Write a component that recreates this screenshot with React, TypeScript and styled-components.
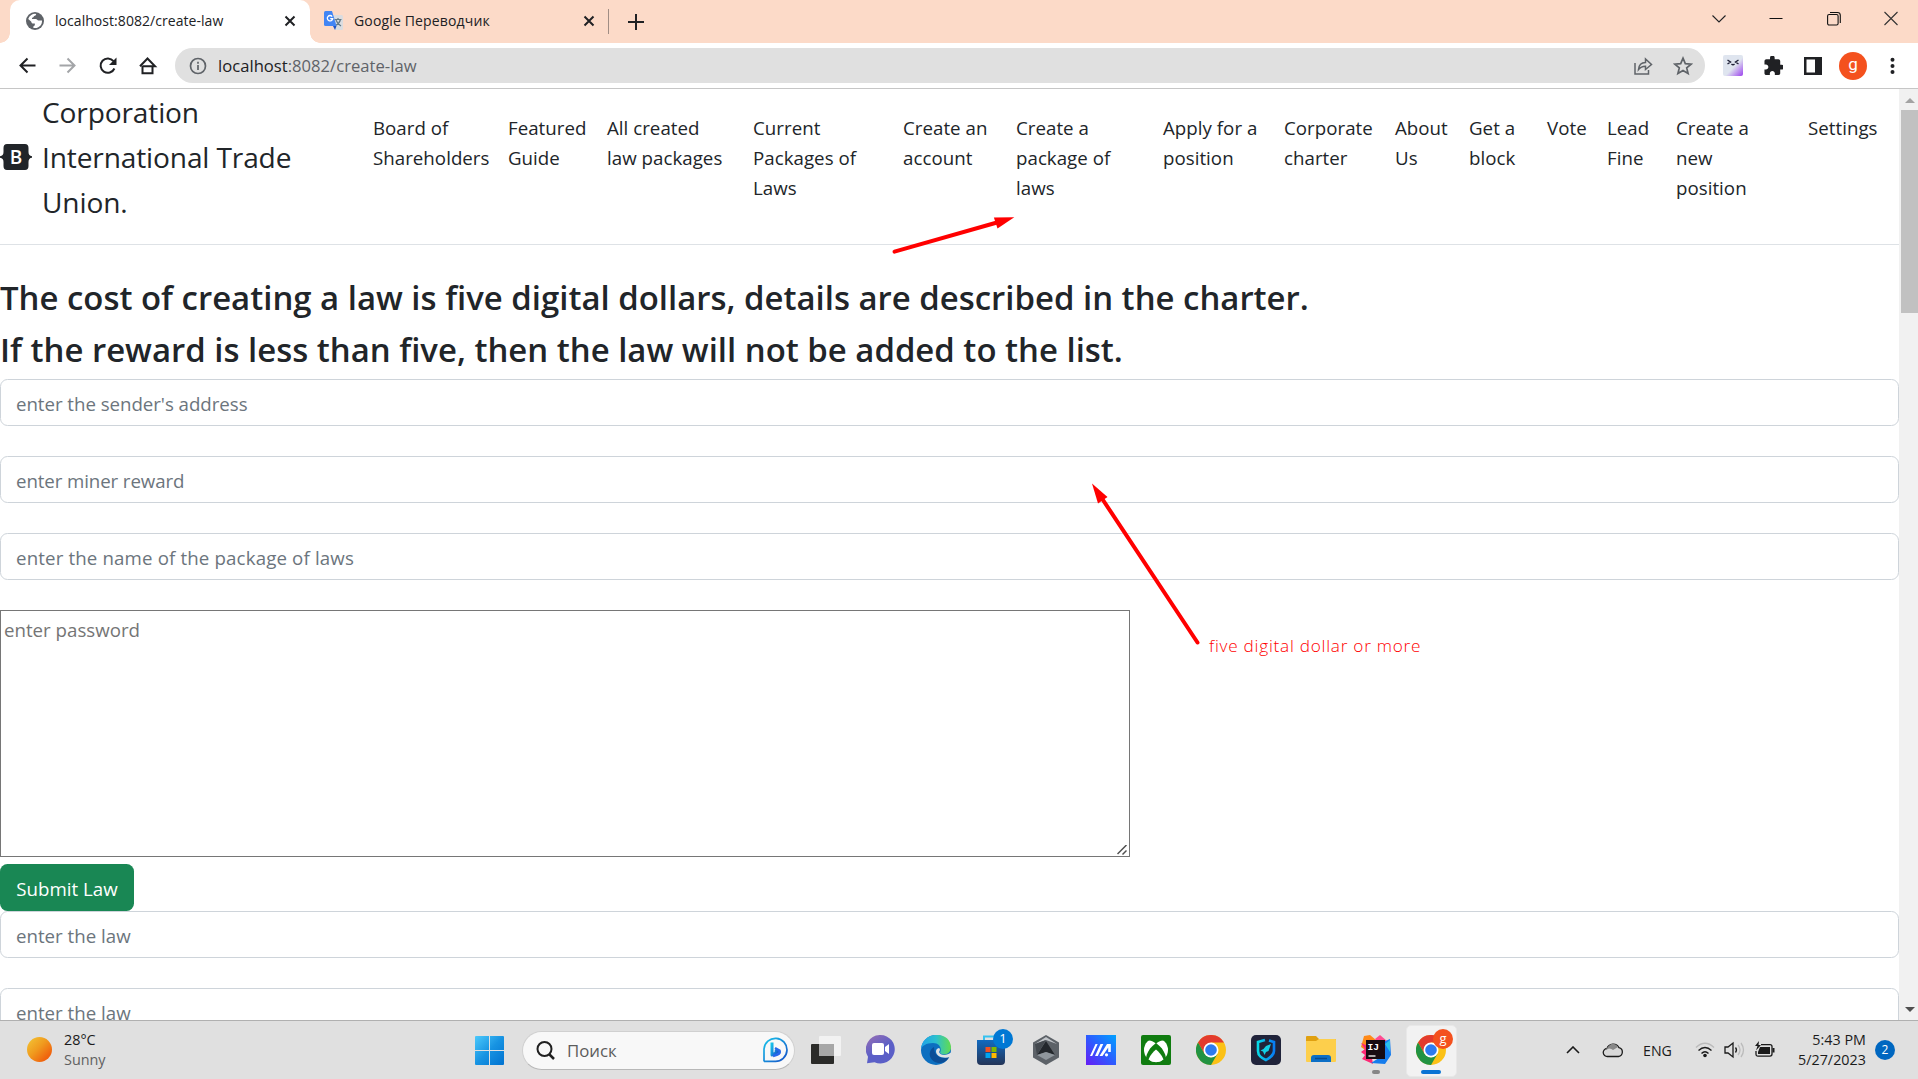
import React from "react";
import styled, { createGlobalStyle } from "styled-components";

const Global = createGlobalStyle`
  * { box-sizing: border-box; }
  html, body { margin: 0; padding: 0; overflow: hidden; background: #fff; }
  body { font-family: "Open Sans", "Noto Sans", sans-serif; color: #212529; }
`;

const Screen = styled.div`
  position: relative;
  width: 1918px;
  height: 1079px;
  display: flex;
  flex-direction: column;
  overflow: hidden;
  background: #fff;
`;

/* ---------- browser chrome ---------- */
const TabStrip = styled.div`
  height: 43px;
  flex: none;
  display: flex;
  background: #fcdac8;
  padding-left: 10px;
`;
const Tab = styled.div<{ $active?: boolean; $width: number }>`
  position: relative;
  width: ${(p) => p.$width}px;
  height: 43px;
  display: flex;
  align-items: center;
  padding: ${(p) => (p.$active ? "0 14px 2px 16px" : "0 13px 2px 14px")};
  border-radius: 10px 10px 0 0;
  background: ${(p) => (p.$active ? "#fff" : "transparent")};
  ${(p) =>
    p.$active &&
    `&::before, &::after {
      content: ""; position: absolute; bottom: 0; width: 10px; height: 10px;
    }
    &::before { left: -10px; background: radial-gradient(circle at 0 0, #fcdac8 9.5px, #fff 10px); }
    &::after { right: -10px; background: radial-gradient(circle at 100% 0, #fcdac8 9.5px, #fff 10px); }`}
`;
const TabTitle = styled.span<{ $spacing?: number }>`
  flex: 1;
  margin-left: 11px;
  padding-bottom: 1px;
  font-size: 14px;
  letter-spacing: ${(p) => p.$spacing ?? 0}px;
  color: #202124;
  white-space: nowrap;
`;
const TabDivider = styled.div`
  width: 1px;
  height: 25px;
  margin-top: 9px;
  background: #a08d84;
`;
const NewTab = styled.div`
  padding: 13px 0 0 19px;
  flex: 1;
`;
const WindowButtons = styled.div`
  display: flex;
  width: 206px;
  justify-content: space-between;
  padding: 11px 20px 0 0;
`;
const Toolbar = styled.div`
  height: 46px;
  flex: none;
  display: flex;
  align-items: center;
  border-bottom: 1px solid #c6c6c6;
  padding: 0 0 0 18px;
`;
const NavButtons = styled.div`
  display: flex;
  width: 157px;
  gap: 20px;
`;
const Omnibox = styled.div`
  width: 1530px;
  height: 35px;
  display: flex;
  align-items: center;
  border-radius: 18px;
  background: #e0e0e0;
  padding: 0 12px 0 14px;
`;
const Url = styled.div`
  flex: 1;
  margin-left: 11px;
  padding-bottom: 1px;
  font-size: 16.6px;
  letter-spacing: 0.02px;
  color: #5f6368;
  b { font-weight: 400; color: #202124; }
`;
const OmniIcons = styled.div`
  display: flex;
  gap: 20px;
`;
const Extensions = styled.div`
  flex: 1;
  display: flex;
  align-items: center;
  padding-left: 18px;
`;
const Slot = styled.div<{ $w: number }>`
  display: flex;
  width: ${(p) => p.$w}px;
`;
const Avatar = styled.div`
  width: 28px;
  height: 28px;
  border-radius: 50%;
  background: #f4511e;
  color: #fff;
  font: 17px/25px Roboto, sans-serif;
  text-align: center;
`;

/* ---------- page ---------- */
const Viewport = styled.div`
  flex: none;
  height: 931px;
  display: flex;
  overflow: hidden;
`;
const Page = styled.main`
  width: 1899px;
  flex: none;
`;
const Header = styled.header`
  height: 156px;
  display: flex;
  border-bottom: 1px solid #dee2e6;
  margin-bottom: 30px;
`;
const Brand = styled.div`
  width: 363px;
  flex: none;
  display: flex;
  align-items: center;
  padding-bottom: 20px;
  gap: 10px;
`;
const BrandText = styled.span`
  padding-top: 1px;
  font-size: 28.1px;
  line-height: 45px;
  letter-spacing: -0.14px;
  white-space: nowrap;
`;
const Nav = styled.nav`
  display: flex;
  padding-top: 24px;
`;
const NavLink = styled.a<{ $w: number }>`
  width: ${(p) => p.$w}px;
  padding-left: 10px;
  font-size: 18.7px;
  line-height: 30px;
  letter-spacing: 0.03px;
  white-space: nowrap;
`;
const Heading = styled.h3`
  height: 42px;
  margin: 0 0 10px;
  padding-top: 2px;
  font-size: 32.9px;
  line-height: 42px;
  font-weight: 600;
  letter-spacing: 0.01px;
  white-space: nowrap;
`;
const Field = styled.input<{ $spacing?: number }>`
  display: block;
  width: 1899px;
  height: 47px;
  margin: 0 0 30px;
  padding: 5px 15px 3px;
  border: 1px solid #ced4da;
  border-radius: 7.5px;
  background: #fff;
  font: 18.7px "Open Sans", "Noto Sans", sans-serif;
  letter-spacing: ${(p) => p.$spacing ?? 0}px;
  outline: none;
  &::placeholder { color: #6c757d; opacity: 1; }
`;
const PasswordArea = styled.textarea`
  display: block;
  width: 1130px;
  height: 247px;
  margin: 0 0 7px;
  padding: 4px 3px;
  border: 1px solid #767676;
  font: 18.7px/30px "Open Sans", "Noto Sans", sans-serif;
  resize: none;
  outline: none;
  &::placeholder { color: #757575; opacity: 1; }
`;
const AreaWrap = styled.div`
  position: relative;
  width: 1130px;
`;
const Grip = styled.svg`
  position: absolute;
  right: 3px;
  bottom: 2px;
`;
const Submit = styled.button`
  display: block;
  width: 134px;
  height: 47px;
  padding: 2px 0 0;
  border: 0;
  border-radius: 7.5px;
  background: #198754;
  color: #fff;
  font: 18.7px "Open Sans", "Noto Sans", sans-serif;
  white-space: nowrap;
`;
const ScrollTrack = styled.div`
  width: 19px;
  display: flex;
  flex-direction: column;
  justify-content: space-between;
  background: #f1f1f1;
  padding: 9px 0 8px 2px;
`;
const ScrollTop = styled.div`
  display: flex;
  flex-direction: column;
  align-items: center;
  gap: 7px;
`;
const Thumb = styled.div`
  width: 17px;
  height: 203px;
  background: #c1c1c1;
`;
const ScrollArrow = styled.div<{ $down?: boolean }>`
  align-self: center;
  width: 0;
  height: 0;
  border: 5px solid transparent;
  border-${(p) => (p.$down ? "top" : "bottom")}-color: ${(p) => (p.$down ? "#505050" : "#a3a3a3")};
  border-${(p) => (p.$down ? "bottom" : "top")}-width: 0;
`;
const Annotations = styled.svg`
  position: absolute;
  left: 0;
  top: 0;
  pointer-events: none;
`;
const Note = styled.div`
  position: absolute;
  left: 1209px;
  top: 633px;
  font-size: 17.2px;
  line-height: 26px;
  font-weight: 300;
  letter-spacing: 0.75px;
  color: #f00;
  white-space: nowrap;
`;

/* ---------- taskbar ---------- */
const Taskbar = styled.footer`
  height: 59px;
  flex: none;
  display: flex;
  align-items: center;
  border-top: 1px solid #b0b0b0;
  background: #e0e0e0;
`;
const Weather = styled.div`
  width: 475px;
  display: flex;
  align-items: center;
  padding-left: 27px;
  gap: 12px;
`;
const Sun = styled.div`
  width: 25px;
  height: 25px;
  margin-top: -2px;
  border-radius: 50%;
  background: linear-gradient(135deg, #f2c335 5%, #f09a1e 45%, #f0640e 80%);
`;
const WeatherText = styled.div`
  font-size: 14.4px;
  line-height: 20px;
  color: #1b1b1b;
  div + div { color: #606060; }
`;
const SearchBox = styled.div`
  width: 273px;
  height: 39px;
  margin: 0 3px 0 18px;
  display: flex;
  align-items: center;
  padding: 0 6px 0 13px;
  border-radius: 20px;
  border: 1px solid #d0d0d0;
  border-bottom-color: #b8b8b8;
  background: #f8f8f8;
  span { flex: 1; margin-left: 12px; color: #5c5c5c; font-size: 16.8px; }
`;
const Apps = styled.div`
  display: flex;
  width: 660px;
`;
const AppSlot = styled.div<{ $selected?: boolean }>`
  position: relative;
  width: 55px;
  height: 50px;
  flex: none;
  display: flex;
  justify-content: center;
  align-items: center;
  padding-bottom: 1px;
  ${(p) =>
    p.$selected &&
    `&::before { content: ""; position: absolute; left: 3px; top: 0; width: 49px; height: 50px; border: 1px solid #e8e8e8; border-radius: 5px; background: #f2f2f2; }`}
  > svg { position: relative; }
`;
const Badge = styled.div<{ $c: string }>`
  position: absolute;
  right: 5px;
  top: 4px;
  width: 20px;
  height: 20px;
  border-radius: 50%;
  background: ${(p) => p.$c};
  color: #fff;
  font-size: 13px;
  line-height: 19px;
  text-align: center;
`;
const Running = styled.div<{ $w: number; $c: string }>`
  position: absolute;
  bottom: 1px;
  left: calc(50% - ${(p) => p.$w / 2}px);
  width: ${(p) => p.$w}px;
  height: 4px;
  border-radius: 2px;
  background: ${(p) => p.$c};
`;
const Tray = styled.div`
  flex: 1;
  display: flex;
  align-items: center;
  justify-content: flex-end;
  padding-right: 23px;
  color: #1b1b1b;
`;
const Lang = styled.span`
  width: 34px;
  margin: 0 18px 0 20px;
  font-size: 14.2px;
`;
const Clock = styled.div`
  width: 76px;
  margin: 0 9px 0 15px;
  font-size: 14.3px;
  line-height: 20px;
  letter-spacing: 0.04px;
  text-align: right;
  white-space: nowrap;
`;
const Count = styled.div`
  width: 20px;
  height: 20px;
  border-radius: 50%;
  background: #0067c0;
  color: #fff;
  font-size: 12px;
  line-height: 20px;
  text-align: center;
`;

const links: [string[], number][] = [
  [["Board of", "Shareholders"], 135],
  [["Featured", "Guide"], 99],
  [["All created", "law packages"], 146],
  [["Current", "Packages of", "Laws"], 150],
  [["Create an", "account"], 113],
  [["Create a", "package of", "laws"], 147],
  [["Apply for a", "position"], 121],
  [["Corporate", "charter"], 111],
  [["About", "Us"], 74],
  [["Get a", "block"], 78],
  [["Vote"], 60],
  [["Lead", "Fine"], 69],
  [["Create a", "new", "position"], 132],
  [["Settings"], 90],
];

const Cross = () => (
  <svg width="12" height="12" viewBox="0 0 12 12" stroke="#202124" strokeWidth="2" fill="none">
    <path d="M1.500 1.500l9 9M10.500 1.500l-9 9" />
  </svg>
);

const ChromeLogo = () => (
  <svg width="30" height="30" viewBox="0 0 30 30">
    <circle cx="15" cy="15" r="15" fill="#fbc116" />
    <path d="M2 7.5A15 15 0 0 1 28 7.5H15L8.5 18.8z" fill="#e33b2e" />
    <path d="M2 7.5A15 15 0 0 0 15 30l6.5-11.3L15 22.5 8.5 18.8z" fill="#229342" />
    <circle cx="15" cy="15" r="7.5" fill="#fff" />
    <circle cx="15" cy="15" r="5.8" fill="#2d7bee" />
  </svg>
);

export default function App() {
  return (
    <Screen>
      <Global />
      <TabStrip>
        <Tab $active $width={300}>
          <svg width="18" height="18" viewBox="0 0 18 18">
            <circle cx="9" cy="9" r="9" fill="#5f6368" />
            <path d="M10.2 1.9c-.3 1.5-1 1.6-2 2-.8.4-.5 1.4-1.3 1.7-1 .3-1.2.8-.7 1.5h3.5c1.5 0 1.6 1.3 2.7 1.5 1.1.1 2-.2 3.600-.2a7 7 0 0 1-8.600 7.500v-1.700c1.500-.4 1.600-1.300 1.400-2.600H6.600c-1 0-1-1.700-1.800-2.300L2.200 7A7.100 7.100 0 0 1 10.200 1.900z" fill="#fff" />
          </svg>
          <TabTitle $spacing={0.05}>localhost:8082/create-law</TabTitle>
          <Cross />
        </Tab>
        <Tab $width={298}>
          <svg width="19" height="19" viewBox="0 0 19 19">
            <path d="M7 4h10.500q1.500 0 1.500 1.500v12q0 1.500-1.500 1.500H11z" fill="#dadce0" />
            <path d="M10.500 8.500h7M14 7v1.500M16.500 8.500q-1 4-5 6M12 9q1 3.500 5 6" stroke="#607988" strokeWidth="1.200" fill="none" />
            <path d="M1.500 0H8l4.500 15H1.500Q0 15 0 13.500v-12Q0 0 1.500 0z" fill="#4285f4" />
            <path d="M9 15h3.500L11 19z" fill="#1a53c5" />
            <path d="M8.200 5.600A2.700 2.700 0 1 0 8.700 7.700H6.200" stroke="#fff" strokeWidth="1.300" fill="none" />
          </svg>
          <TabTitle $spacing={0.15}>Google Переводчик</TabTitle>
          <Cross />
        </Tab>
        <TabDivider />
        <NewTab>
          <svg width="16" height="16" viewBox="0 0 16 16" stroke="#202124" strokeWidth="2">
            <path d="M8 0v16M0 8h16" />
          </svg>
        </NewTab>
        <WindowButtons>
          <svg width="14" height="15" viewBox="0 0 14 15" stroke="#202124" strokeWidth="1.100" fill="none"><path d="M.5 4.500L7 11l6.500-6.500" /></svg>
          <svg width="14" height="15" viewBox="0 0 14 15" stroke="#111" fill="none"><path d="M.5 7.500h13" /></svg>
          <svg width="14" height="15" viewBox="0 0 14 15" stroke="#111" strokeWidth="1.100" fill="none"><rect x=".6" y="3.500" width="10.500" height="10.500" rx="1.500" /><path d="M3 1.500h7.500q2.800 0 2.800 2.800V12" /></svg>
          <svg width="14" height="15" viewBox="0 0 14 15" stroke="#333" strokeWidth="1.100" fill="none"><path d="M.5 1l13 13M13.500 1L.5 14" /></svg>
        </WindowButtons>
      </TabStrip>

      <Toolbar>
        <NavButtons>
          <svg width="20" height="20" viewBox="0 0 20 20" stroke="#202124" strokeWidth="2" fill="none"><path d="M17.500 9.500H2.500M9.500 2.500l-7 7 7 7" /></svg>
          <svg width="20" height="20" viewBox="0 0 20 20" stroke="#a3a5a8" strokeWidth="2" fill="none"><path d="M1.500 9.500h15M9.500 2.500l7 7-7 7" /></svg>
          <svg width="20" height="20" viewBox="0 0 20 20" fill="none"><path d="M16.400 12.500A7.200 7.200 0 1 1 15.500 5.200" stroke="#202124" strokeWidth="2" /><path d="M18.500 1.500v7.500H11z" fill="#202124" /></svg>
          <svg width="20" height="20" viewBox="0 0 20 20" stroke="#202124" strokeWidth="2" fill="none"><path d="M4.500 10V17.200h10V10M2 10.200L9.500 2.500l7.500 7.700H4.500" /></svg>
        </NavButtons>
        <Omnibox>
          <svg width="18" height="18" viewBox="0 0 18 18" stroke="#5f6368" strokeWidth="1.700" fill="none"><circle cx="9" cy="9" r="7.500" /><path d="M9 8v5M9 4.800v1.900" /></svg>
          <Url><b>localhost</b>:8082/create-law</Url>
          <OmniIcons>
            <svg width="20" height="20" viewBox="0 0 20 20" stroke="#5f6368" strokeWidth="1.500" fill="none"><path d="M2 7v11h13.500v-4M5.500 13.500c.4-4.500 2.800-7 7-7V3l6 5.500-6 5v-3.300c-3 0-5.200.9-7 3.300z" /></svg>
            <svg width="20" height="20" viewBox="0 0 20 20" stroke="#5f6368" strokeWidth="1.700" fill="none"><path d="M10 2.200l2.300 5.400 5.900.5-4.500 3.800 1.400 5.700-5.100-3-5.100 3 1.400-5.700-4.500-3.800 5.900-.5z" /></svg>
          </OmniIcons>
        </Omnibox>
        <Extensions>
          <Slot $w={41}>
            <svg width="20" height="21" viewBox="0 0 20 21">
              <defs><linearGradient id="ext" x1="0" y1="0" x2="1" y2="1"><stop offset=".55" stopColor="#dfe5ef" /><stop offset="1" stopColor="#9b3fee" /></linearGradient></defs>
              <rect width="20" height="21" rx="2" fill="url(#ext)" />
              <path d="M4.500 5l3 2-3 2M15.500 5l-3 2 3 2M8.500 9q1.500 1.500 3 0" stroke="#202138" strokeWidth="1.400" fill="none" />
            </svg>
          </Slot>
          <Slot $w={40}>
            <svg width="19" height="19" viewBox="1.500 1.500 20.500 20.500"><path fill="#202124" d="M20.500 11H19V7c0-1.100-.9-2-2-2h-4V3.500a2.500 2.500 0 0 0-5 0V5H4c-1.100 0-1.990.9-1.990 2v3.800H3.500c1.490 0 2.700 1.210 2.700 2.700s-1.210 2.700-2.700 2.700H2V20c0 1.100.9 2 2 2h3.800v-1.500c0-1.490 1.210-2.700 2.700-2.700s2.700 1.210 2.700 2.700V22H17c1.100 0 2-.9 2-2v-4h1.500a2.500 2.500 0 0 0 0-5z" /></svg>
          </Slot>
          <Slot $w={35}>
            <svg width="18" height="18" viewBox="0 0 18 18"><path d="M0 0h18v18H0z" fill="#202124" /><path d="M2.500 2.500H11v13H2.500z" fill="#fff" /></svg>
          </Slot>
          <Avatar>g</Avatar>
          <svg width="51" height="18" viewBox="0 0 51 18" fill="#202124"><circle cx="25.500" cy="2.800" r="2" /><circle cx="25.500" cy="9" r="2" /><circle cx="25.500" cy="15" r="2" /></svg>
        </Extensions>
      </Toolbar>

      <Viewport>
        <Page>
          <Header>
            <Brand>
              <svg width="32" height="28" viewBox="0 0 32 28">
                <path d="M7 1h18q3.500 0 3.500 4v4q0 4 3.500 4.200v1.600q-3.500.2-3.500 4.200v4q0 4-3.500 4H7q-3.500 0-3.500-4v-4Q3.500 15-.5 14.800v-1.600q4-.2 4-4.200V5q0-4 3.500-4z" fill="#212529" />
                <text x="9.800" y="20.800" fontSize="19" fontWeight="600" fontFamily="Open Sans" fill="#fff">B</text>
              </svg>
              <BrandText>
                Corporation<br />International Trade<br />Union.
              </BrandText>
            </Brand>
            <Nav>
              {links.map(([lines, w], i) => (
                <NavLink key={i} $w={w}>
                  {lines.map((l) => (
                    <React.Fragment key={l}>{l}<br /></React.Fragment>
                  ))}
                </NavLink>
              ))}
            </Nav>
          </Header>
          <Heading>The cost of creating a law is five digital dollars, details are described in the charter.</Heading>
          <Heading>If the reward is less than five, then the law will not be added to the list.</Heading>
          <Field placeholder="enter the sender's address" $spacing={-0.04} />
          <Field placeholder="enter miner reward" $spacing={-0.1} />
          <Field placeholder="enter the name of the package of laws" $spacing={0.14} />
          <AreaWrap>
            <PasswordArea placeholder="enter password" />
            <Grip width="10" height="10" viewBox="0 0 10 10" stroke="#505050" strokeWidth="1.500" fill="none">
              <path d="M.5 9L9.500 0M5.500 9.500l4-4" />
            </Grip>
          </AreaWrap>
          <Submit>Submit Law</Submit>
          <Field placeholder="enter the law" />
          <Field placeholder="enter the law" />
        </Page>
        <ScrollTrack>
          <ScrollTop>
            <ScrollArrow />
            <Thumb />
          </ScrollTop>
          <ScrollArrow $down />
        </ScrollTrack>
      </Viewport>

      <Taskbar>
        <Weather>
          <Sun />
          <WeatherText>
            <div>28°C</div>
            <div>Sunny</div>
          </WeatherText>
        </Weather>
        <svg width="29" height="29" viewBox="0 0 29 29">
          <defs><linearGradient id="win" x1="0" y1="0" x2="1" y2="1"><stop stopColor="#4cc9fb" /><stop offset=".5" stopColor="#1793e2" /><stop offset="1" stopColor="#0072d0" /></linearGradient></defs>
          <path fill="url(#win)" d="M1 0h13v14H0V1q0-1 1-1zM15 0h13q1 0 1 1v13H15zM0 15h14v14H1q-1 0-1-1zM15 15h14v13q0 1-1 1H15z" />
        </svg>
        <SearchBox>
          <svg width="19" height="19" viewBox="0 0 19 19" stroke="#202020" strokeWidth="2" fill="none"><circle cx="8.500" cy="8" r="7" /><path d="M13 13l5 5" strokeWidth="2.500" /></svg>
          <span>Поиск</span>
          <svg width="26" height="26" viewBox="0 0 26 26" fill="none">
            <defs><linearGradient id="bing" x1="0" y1="0" x2="1" y2="1"><stop stopColor="#18c4ea" /><stop offset="1" stopColor="#1650c8" /></linearGradient></defs>
            <path d="M2 24.500V12A11.500 11.500 0 1 1 13 24.300H2z" stroke="url(#bing)" strokeWidth="1.700" />
            <path d="M10 5.500V18l6-3.200-3-1.800" stroke="url(#bing)" strokeWidth="3" strokeLinejoin="round" />
            <path d="M13 11l4.500 2.500q1 3-2 4L11 19" stroke="#2867ea" strokeWidth="2.500" />
          </svg>
        </SearchBox>
        <Apps>
          <AppSlot>
            <svg width="30" height="28" viewBox="0 0 30 28"><rect y="8" width="23" height="20" rx="1" fill="#2b2b29" /><rect x="8" width="22" height="20" rx="1" fill="#f4f4f4" opacity=".88" /><path d="M8 8h15v12H8z" fill="#a7a7a7" /></svg>
          </AppSlot>
          <AppSlot>
            <svg width="29" height="29" viewBox="0 0 29 29"><defs><linearGradient id="chat" x1="0" y1="0" x2=".6" y2="1"><stop stopColor="#9a6fb3" /><stop offset=".6" stopColor="#5b5fc7" /></linearGradient></defs><path d="M14.500 0a14.300 14.300 0 1 1-6 27.300L1 28.300l1-6.500A14.300 14.300 0 0 1 14.500 0z" fill="url(#chat)" /><rect x="6" y="8" width="12" height="12" rx="2" fill="#fff" /><path d="M19 12l4-3v10l-4-3z" fill="#fff" /></svg>
          </AppSlot>
          <AppSlot>
            <svg width="30" height="30" viewBox="0 0 30 30"><defs><linearGradient id="edge"><stop stopColor="#1fa2e8" /><stop offset=".5" stopColor="#2cc0cf" /><stop offset="1" stopColor="#62dc4e" /></linearGradient></defs><circle cx="15" cy="15" r="15" fill="#0d6fc0" /><path d="M0 14C1-4 29-5 30 12c.2 8-9 9-11 5.500C21 14 19 8 12 8 5 8 1 11 0 14z" fill="url(#edge)" /><path d="M13 12c-8 5-4 16 6 16 4 0 8-3 9-6-8 3-15-1-15-10z" fill="#0c4e97" /><path d="M18 17c1.500 4 8 3.500 12 .5v4c-7 3-15 0-15-5 0-2 1-3 3-3.500 1.500 1 1 2.500 0 4z" fill="#e0e3e4" /></svg>
          </AppSlot>
          <AppSlot>
            <svg width="30" height="30" viewBox="0 0 30 30"><defs><linearGradient id="store" x2="0" y2="1"><stop stopColor="#116ac0" /><stop offset="1" stopColor="#243457" /></linearGradient></defs><path d="M8 6V1.500h11V6" stroke="#37c2ef" strokeWidth="2" fill="none" /><path d="M1 5h28v21q0 4-4 4H5q-4 0-4-4z" fill="url(#store)" /><path d="M9.500 12h5v5h-5z" fill="#f25022" /><path d="M15.500 12h5v5h-5z" fill="#7fba00" /><path d="M9.500 18h5v5h-5z" fill="#00a4ef" /><path d="M15.500 18h5v5h-5z" fill="#ffb900" /></svg>
            <Badge $c="#0078d4">1</Badge>
          </AppSlot>
          <AppSlot>
            <svg width="28" height="30" viewBox="0 0 28 30"><path d="M14 0l13 7.500v15L14 30 1 22.500v-15z" fill="#5d6268" /><path d="M14 2l11 7-11-4L3 9z" fill="#c0c4c8" /><path d="M14 6l9 14-9-3-9 3z" fill="#23272c" /><path d="M5 20l9-3 9 3-9 5z" fill="#8f969c" /><path d="M3 9l11-4L5 20z" fill="#43484e" /></svg>
          </AppSlot>
          <AppSlot>
            <svg width="30" height="30" viewBox="0 0 30 30"><defs><linearGradient id="asus" x1="0" y1="1" x2="1" y2="0"><stop stopColor="#671cf5" /><stop offset=".5" stopColor="#2d5cff" /><stop offset="1" stopColor="#00a2ff" /></linearGradient></defs><path d="M0 0h30v30H0z" fill="url(#asus)" /><path d="M4 21L9.500 9h2.200L6.200 21zM9 21l5.500-12h2.800L11.800 21zM13.500 21L21 9h3.800v8h-2.600v-4.500L16.500 21z" fill="#fff" /><circle cx="20.500" cy="19.800" r="1.600" fill="#fff" /></svg>
          </AppSlot>
          <AppSlot>
            <svg width="30" height="30" viewBox="0 0 30 30"><rect width="30" height="30" rx="2" fill="#107c10" /><circle cx="15" cy="15" r="12" fill="#fff" /><path d="M7 5.500c3-.5 6 1.500 8 3.200 2-1.700 5-3.700 8-3.200-2-2-5-3.500-8-3.500S9 3.500 7 5.500zM11.500 11C8 14 5.500 19 5 23c1 2 3 2.500 4 3 1-4 3.500-7.500 6-10 2.500 2.500 5 6 6 10 1-.5 3-1 4-3-.5-4-3-9-6.500-12L15 8z" fill="#107c10" /><path d="M7.500 24.500c2-5 5-8 7.500-10 2.500 2 5.500 5 7.500 10a12 12 0 0 1-15 0z" fill="#fff" /></svg>
          </AppSlot>
          <AppSlot><ChromeLogo /></AppSlot>
          <AppSlot>
            <svg width="30" height="30" viewBox="0 0 30 30"><defs><linearGradient id="vpn"><stop stopColor="#06d9e8" /><stop offset="1" stopColor="#087cf4" /></linearGradient></defs><rect width="30" height="30" rx="5" fill="#20233a" /><path d="M14 5L7 7v9c0 5 4 7 8 9 5-3 8-5 8-9V7l-5-1.500" stroke="url(#vpn)" strokeWidth="2.600" fill="none" /><path d="M20 9l-2.500 7-2.500 1-1.500 3-1.500-3.500-2.500-1 3-1.500 2.500-3z" fill="#12cfe5" /></svg>
          </AppSlot>
          <AppSlot>
            <svg width="30" height="27" viewBox="0 0 30 27"><path d="M0 1q0-1 1-1h9l3 3h16q1 0 1 1v9H0z" fill="#e0a010" /><path d="M0 5h10l3-2h16q1 0 1 1v21q0 1-1 1H1q-1 0-1-1z" fill="#fdcf4c" /><path d="M5 26v-4q0-3 3-3h14q3 0 3 3v4z" fill="#0c6fc6" /><path d="M9 22.500h12" stroke="#084b8e" strokeWidth="1.500" /></svg>
          </AppSlot>
          <AppSlot>
            <svg width="30" height="30" viewBox="0 0 30 30"><path d="M3 1l6-1 6 5-8 12-7-5z" fill="#ff8a18" /><path d="M0 8l9 4 3 17-11-5 3-4-4-3 4-3z" fill="#fe2975" /><path d="M14 4l5-4 7 6-8 4z" fill="#ff4c91" /><path d="M22 7l7-3 1 16-6 9-14-1 11-7z" fill="#167ded" /><path d="M24 9l5-4v12z" fill="#29c2ec" /><path d="M5 5h19v19H5z" fill="#170b12" /><text x="6.500" y="14.500" fontSize="9.500" fontWeight="700" fontFamily="Liberation Mono" fill="#fff">IJ</text><path d="M7.500 21h7" stroke="#fff" strokeWidth="1.300" /></svg>
            <Running $w={8} $c="#868686" />
          </AppSlot>
          <AppSlot $selected>
            <ChromeLogo />
            <Badge $c="#f4511e">g</Badge>
            <Running $w={20} $c="#0a74d4" />
          </AppSlot>
        </Apps>
        <Tray>
          <svg width="14" height="8" viewBox="0 0 14 8" stroke="#1b1b1b" strokeWidth="1.600" fill="none"><path d="M1 7l6-6 6 6" /></svg>
          <svg width="43" height="16" viewBox="-23 0 43 16"><path d="M4.500 14.500a4 4 0 0 1-.5-8 6.500 6.500 0 0 1 12-.8 4.500 4.500 0 0 1-.5 8.800z" fill="#d8d8d8" stroke="#1b1b1b" strokeWidth="1.300" /><path d="M2 8q5-3 8 0l5-3q-5-7-11 1z" fill="#888" /></svg>
          <Lang>ENG</Lang>
          <svg width="20" height="16" viewBox="0 0 20 16" fill="none" strokeWidth="1.400"><path d="M1 5.500q9-8.500 18 0" stroke="#bbb" /><path d="M3.500 8.500q6.500-6 13 0M6.500 11.500q3.500-3.500 7 0" stroke="#1b1b1b" /><circle cx="10" cy="13.500" r="1.800" fill="#1b1b1b" /></svg>
          <svg width="30" height="18" viewBox="-9 0 30 18" fill="none" strokeWidth="1.300"><path d="M1 6h3l5-4v14l-5-4H1z" stroke="#1b1b1b" /><path d="M11.500 6.500q2 2.500 0 5" stroke="#1b1b1b" /><path d="M14 4q4 5 0 10M17 2q5 7 0 14" stroke="#bbb" /></svg>
          <svg width="30" height="18" viewBox="-10 0 30 18"><path d="M6 3.600h9q2 0 2 2v7.500q0 2-2 2H3q-2 0-2-2V10" fill="none" stroke="#1b1b1b" strokeWidth="1.300" /><path d="M5 6h10v7H3v-2zM17.500 7h2v4.500h-2zM4 0L0 5h2.500L1 9.500l5-5.500H3.500z" fill="#1b1b1b" /></svg>
          <Clock>5:43 PM<br />5/27/2023</Clock>
          <Count>2</Count>
        </Tray>
      </Taskbar>

      <Annotations width="1918" height="1079" viewBox="0 0 1918 1079" fill="#f00" stroke="#f00">
        <path d="M894.500 251.700L997 222.500" strokeWidth="4" strokeLinecap="round" />
        <path d="M1014.300 217.300L993.900 217.500L997.500 228.500z" stroke="none" />
        <path d="M1197.500 642.500L1101 497" strokeWidth="4" strokeLinecap="round" />
        <path d="M1092 483.500L1107.500 497L1098 503.500z" stroke="none" />
      </Annotations>
      <Note>five digital dollar or more</Note>
    </Screen>
  );
}
